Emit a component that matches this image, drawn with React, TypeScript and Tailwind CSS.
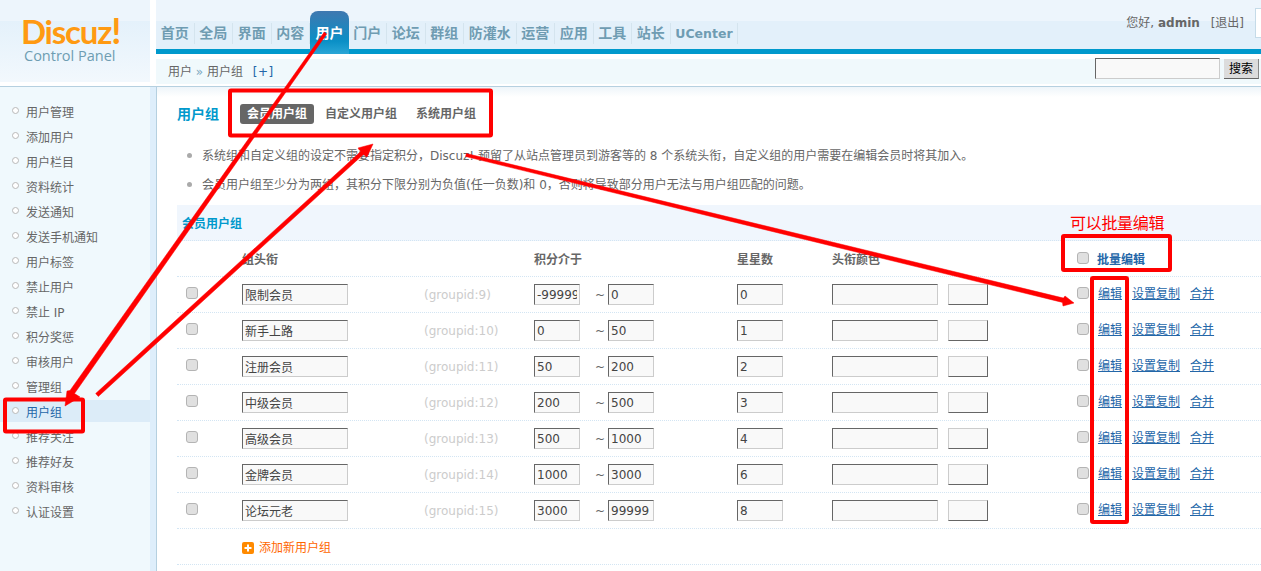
import React from "react";

const font = "font-['DejaVu_Sans','Noto_Sans_CJK_SC',sans-serif]";
const rowGrid = "grid grid-cols-[65px_182px_110px_203px_95px_245px_184px] items-center";

const navItems = ["首页", "全局", "界面", "内容", "用户", "门户", "论坛", "群组", "防灌水", "运营", "应用", "工具", "站长", "UCenter"];
const sideItems = ["用户管理", "添加用户", "用户栏目", "资料统计", "发送通知", "发送手机通知", "用户标签", "禁止用户", "禁止 IP", "积分奖惩", "审核用户", "管理组", "用户组", "推荐关注", "推荐好友", "资料审核", "认证设置"];
const groups = [
  { name: "限制会员", id: 9, low: "-99999", high: "0", stars: "0" },
  { name: "新手上路", id: 10, low: "0", high: "50", stars: "1" },
  { name: "注册会员", id: 11, low: "50", high: "200", stars: "2" },
  { name: "中级会员", id: 12, low: "200", high: "500", stars: "3" },
  { name: "高级会员", id: 13, low: "500", high: "1000", stars: "4" },
  { name: "金牌会员", id: 14, low: "1000", high: "3000", stars: "6" },
  { name: "论坛元老", id: 15, low: "3000", high: "99999", stars: "8" },
];

function Box({ value, width }: { value: string; width: string }) {
  return (
    <input
      readOnly
      defaultValue={value}
      className={`${width} h-[21px] border border-t-[#666] border-l-[#666] border-r-[#ccc] border-b-[#ccc] bg-[#f9f9f9] px-[2px] text-[12px] text-[#444] outline-none`}
    />
  );
}

function Check() {
  return (
    <input
      type="checkbox"
      readOnly
      className="-mt-[3px] block size-[12px] appearance-none rounded-[3px] border border-[#b4b4b4] bg-[#e0e0e0]"
    />
  );
}

function Annotations() {
  return (
    <svg className="pointer-events-none absolute left-0 top-0" width="1261" height="571" viewBox="0 0 1261 571">
      <g fill="none" stroke="#ff0000" strokeLinejoin="round">
        <rect x="230" y="90.5" width="261" height="45" strokeWidth="4" rx="1" />
        <rect x="5" y="399.5" width="78" height="32" strokeWidth="4" rx="1" />
        <rect x="1063" y="236" width="107" height="34" strokeWidth="4" rx="1" />
        <rect x="1092" y="278" width="35" height="244" strokeWidth="4" rx="1" />
      </g>
      <g fill="#ff0000" stroke="#ff0000" strokeWidth="0.5" strokeLinejoin="round">
        <polygon points="324.3,32.1 326.7,33.9 74.5,393.5 80,397 65,406 67,391 70,390.5" />
        <polygon points="95.7,393.5 360.7,151.5 358,148 373,144 367,157 363.3,154.5 98.3,396.5" />
        <polygon points="466.4,153.5 1063.5,298.1 1065,296 1074,303 1063,306 1062.5,302.4 465.6,156.5" />
      </g>
    </svg>
  );
}

export default function App() {
  return (
    <div className={`relative h-[571px] w-full overflow-hidden bg-white text-[12px] text-[#666] ${font}`}>
      <header className="flex h-[87px] border-b border-[#b5d0e0]">
        <div className="h-[82px] w-[150px] shrink-0 bg-[linear-gradient(180deg,#edf5fc_0,#edf5fc_21px,#e4f1fb_21px,#f2f8fd_100%)] pl-[21px] pt-[14px]">
          <div className="h-[33px] font-['Lato',sans-serif] text-[33px] font-bold leading-[33px] tracking-[-1.2px] text-[#ff9a12]">
            Discuz<span className="text-[36px] leading-[33px]">!</span>
          </div>
          <div className="pl-[3px] font-['Open_Sans',sans-serif] text-[14.5px] leading-[18px] text-[#6e9db2]">Control Panel</div>
        </div>
        <div className="w-[6px] shrink-0" />
        <div className="flex min-w-0 flex-1 flex-col">
          <div className="relative flex h-[49px] shrink-0 bg-[linear-gradient(180deg,#edf5fc_0,#edf5fc_21px,#e3f0fa_21px,#e3f0fa_100%)]">
            <nav className="flex items-start pt-[23px]">
              {navItems.map((item) => (
                <div key={item} className="flex h-[21px] items-center border-r border-[#d4e4ee] px-[4.75px] text-[14px] font-bold leading-[21px] text-[#6f9cb2]">
                  {item === "UCenter" ? <span className="text-[12.5px]">{item}</span> : item}
                </div>
              ))}
            </nav>
            <div className="absolute left-[154px] top-[11px] flex h-[43px] w-[39px] justify-center rounded-t-[8px] bg-[linear-gradient(180deg,#3f78b0_0%,#0a8fc6_70%,#2aa6d6_100%)] pt-[12px] text-[14px] font-bold leading-[21px] text-white">
              用户
            </div>
            <div className="ml-auto flex items-start gap-[11px] pt-[14px]">
              <span className="leading-[18px] text-[#666]">
                您好, <b>admin</b> <span className="ml-[7px]">[退出]</span>
              </span>
              <div className="mt-[-6px] h-[30px] w-[6px] border border-r-0 border-[#c5dbe8] bg-white" />
            </div>
          </div>
          <div className="h-[5px] shrink-0 bg-[#0099cc]" />
          <div className="mt-[5px] flex h-[25px] justify-between bg-[#f0f9fc] pl-[12px] pr-[2px]">
            <div className="pt-[2px] leading-[23px] text-[#666]">
              用户 <span className="text-[#7aa7c0]">»</span> 用户组 <span className="ml-[6px] tracking-[0.5px] text-[#2366a8]">[+]</span>
            </div>
            <div className="-mt-[1px] flex items-start gap-[4px]">
              <input readOnly className="h-[21px] w-[125px] border border-t-[#666] border-l-[#666] border-r-[#ccc] border-b-[#ccc] bg-[#f9f9f9] outline-none" />
              <button type="button" className="mt-[1px] h-[20px] w-[35px] border-b border-r border-b-[#666] border-r-[#888] bg-[#dcdcdc] text-[12px] leading-[20px] text-black">
                搜索
              </button>
            </div>
          </div>
        </div>
      </header>

      <div className="flex h-[484px]">
        <aside className="h-full w-[150px] shrink-0 bg-[#f0f9fd] pt-[13px]">
          {sideItems.map((item) => (
            <div
              key={item}
              className={`mb-[3px] flex h-[22px] items-start gap-[7px] pl-[12px] leading-[26px] ${item === "用户组" ? "bg-[#dcecf8] text-[#2366a8]" : ""}`}
            >
              <span className="mt-[7px] size-[7px] shrink-0 rounded-full border border-[#b9b9b9] bg-white" />
              {item}
            </div>
          ))}
        </aside>
        <div className="h-full w-[6px] shrink-0 bg-[#deeefb]" />
        <main className="min-w-0 flex-1 border-l border-[#b5d0e0] bg-[linear-gradient(180deg,#eef5fa_0,#ffffff_10px)] pl-[20px] pt-[17px]">
          <div className="flex h-[20px] items-center">
            <h3 className="mr-[21px] text-[14px] font-bold text-[#0099cc]">用户组</h3>
            <span className="rounded-[3px] bg-[#666] px-[7px] font-bold leading-[20px] text-white">会员用户组</span>
            <span className="ml-[4px] px-[7px] font-bold leading-[20px]">自定义用户组</span>
            <span className="ml-[5px] px-[7px] font-bold leading-[20px]">系统用户组</span>
          </div>

          <ul className="mt-[17px]">
            <li className="flex h-[29px] items-center">
              <span className="mx-[10px] size-[5px] rounded-full bg-[#aaa]" />
              系统组和自定义组的设定不需要指定积分，Discuz! 预留了从站点管理员到游客等的 8 个系统头衔，自定义组的用户需要在编辑会员时将其加入。
            </li>
            <li className="flex h-[29px] items-center">
              <span className="mx-[10px] size-[5px] rounded-full bg-[#aaa]" />
              会员用户组至少分为两组，其积分下限分别为负值(任一负数)和 0，否则将导致部分用户无法与用户组匹配的问题。
            </li>
          </ul>

          <div className="mt-[6px] w-[1084px]">
            <div className="flex h-[36px] items-center border-b border-dotted border-[#d3e5f3] bg-[#f0f6fd] pl-[5px] pt-[2px] font-bold text-[#0099cc]">
              会员用户组
            </div>
            <div className={`${rowGrid} h-[36px] border-b border-dotted border-[#d3e5f3] pt-[2px] font-bold`}>
              <span />
              <span>组头衔</span>
              <span />
              <span>积分介于</span>
              <span>星星数</span>
              <span>头衔颜色</span>
              <span className="flex items-center gap-[8px] text-[#2366a8]">
                <Check />
                批量编辑
              </span>
            </div>
            {groups.map((g) => (
              <div key={g.id} className={`${rowGrid} h-[36px] border-b border-dotted border-[#d3e5f3]`}>
                <span className="pl-[9px]">
                  <Check />
                </span>
                <span>
                  <Box value={g.name} width="w-[106px]" />
                </span>
                <span className="text-[#ccc]">(groupid:{g.id})</span>
                <span className="flex items-center">
                  <Box value={g.low} width="w-[46px]" />
                  <span className="w-[28px] pl-[15px] text-[12px]">~</span>
                  <Box value={g.high} width="w-[46px]" />
                </span>
                <span>
                  <Box value={g.stars} width="w-[46px]" />
                </span>
                <span className="flex items-center gap-[10px]">
                  <Box value="" width="w-[106px]" />
                  <input readOnly className="h-[21px] w-[40px] border border-t-[#ccc] border-l-[#ccc] border-r-[#666] border-b-[#666] bg-[#f9f9f9] outline-none" />
                </span>
                <span className="flex items-center text-[#2366a8] underline">
                  <Check />
                  <a className="mb-[2px] ml-[9px]">编辑</a>
                  <a className="mb-[2px] ml-[10px]">设置复制</a>
                  <a className="mb-[2px] ml-[10px]">合并</a>
                </span>
              </div>
            ))}
            <div className={`${rowGrid} h-[36px] border-b border-dotted border-[#d3e5f3] pt-[2px]`}>
              <span />
              <span className="col-span-2 flex items-center gap-[5px] text-[#ff6600]">
                <svg width="12" height="12" viewBox="0 0 12 12">
                  <rect width="12" height="12" rx="2" fill="#ff8a00" />
                  <rect x="2.5" y="5" width="7" height="2" fill="#fff" />
                  <rect x="5" y="2.5" width="2" height="7" fill="#fff" />
                </svg>
                添加新用户组
              </span>
            </div>
          </div>
        </main>
      </div>

      <div className="absolute left-[1070px] top-[213px] text-[16px] leading-[22px] tracking-[-0.3px] text-[#ff0000]">可以批量编辑</div>
      <Annotations />
    </div>
  );
}
